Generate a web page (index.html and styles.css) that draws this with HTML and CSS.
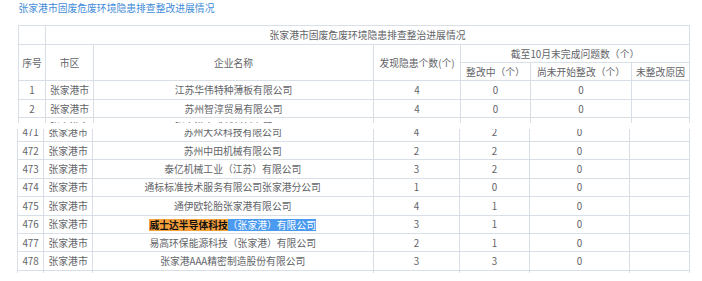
FILE: index.html
```html
<!DOCTYPE html>
<html lang="zh">
<head>
<meta charset="utf-8">
<link rel="stylesheet" href="styles.css">
</head>
<body>
<div class="title">张家港市固废危废环境隐患排查整改进展情况</div>
<div class="piece top">
  <table class="grid">
    <colgroup>
      <col class="c1"><col class="c2"><col class="c3"><col class="c4"><col class="c5"><col class="c6"><col class="c7">
    </colgroup>
    <tr class="h1"><td></td><td colspan="6">张家港市固废危废环境隐患排查整治进展情况</td></tr>
    <tr class="h2"><td rowspan="2">序号</td><td rowspan="2">市区</td><td rowspan="2">企业名称</td><td rowspan="2">发现隐患个数(个)</td><td colspan="3">截至10月末完成问题数（个）</td></tr>
    <tr class="h3"><td>整改中（个）</td><td>尚未开始整改（个）</td><td>未整改原因</td></tr>
    <tr class="d1"><td>1</td><td>张家港市</td><td>江苏华伟特种薄板有限公司</td><td>4</td><td>0</td><td>0</td><td></td></tr>
    <tr class="d2"><td>2</td><td>张家港市</td><td>苏州智淳贸易有限公司</td><td>4</td><td>0</td><td>0</td><td></td></tr>
    <tr class="d2"><td>3</td><td>张家港市</td><td>张家港大成新材料有限公司</td><td>4</td><td>0</td><td>0</td><td></td></tr>
  </table>
</div>
<div class="piece bottom">
  <table class="grid">
    <colgroup>
      <col class="b1"><col class="b2"><col class="b3"><col class="b4"><col class="b5"><col class="b6"><col class="b7">
    </colgroup>
    <tr><td>471</td><td>张家港市</td><td>苏州大众科技有限公司</td><td>4</td><td>2</td><td>0</td><td></td></tr>
    <tr><td>472</td><td>张家港市</td><td>苏州中田机械有限公司</td><td>2</td><td>2</td><td>0</td><td></td></tr>
    <tr><td>473</td><td>张家港市</td><td>泰亿机械工业（江苏）有限公司</td><td>3</td><td>2</td><td>0</td><td></td></tr>
    <tr><td>474</td><td>张家港市</td><td>通标标准技术服务有限公司张家港分公司</td><td>1</td><td>0</td><td>0</td><td></td></tr>
    <tr><td>475</td><td>张家港市</td><td>通伊欧轮胎张家港有限公司</td><td>4</td><td>1</td><td>0</td><td></td></tr>
    <tr><td>476</td><td>张家港市</td><td><span class="hl hl-match">威士达半导体科技</span><span class="hl hl-sel">（张家港）有限公司</span></td><td>3</td><td>1</td><td>0</td><td></td></tr>
    <tr><td>477</td><td>张家港市</td><td>易高环保能源科技（张家港）有限公司</td><td>2</td><td>1</td><td>0</td><td></td></tr>
    <tr><td>478</td><td>张家港市</td><td>张家港AAA精密制造股份有限公司</td><td>3</td><td>3</td><td>0</td><td></td></tr>
    <tr><td></td><td></td><td></td><td></td><td></td><td></td><td></td></tr>
  </table>
</div>
</body>
</html>
```
FILE: styles.css
```css
html, body {
  margin: 0;
  padding: 0;
  background: #ffffff;
}
body {
  font-family: "Noto Sans CJK SC", "Noto Sans", sans-serif;
  font-size: 9.8px;
  color: #626468;
}
.title {
  box-sizing: border-box;
  height: 25px;
  padding: 1px 0 0 18.5px;
  line-height: 14px;
  color: #3f8cd9;
}
.piece {
  overflow: hidden;
}
.top {
  height: 98.3px;
  padding-left: 18px;
}
.bottom {
  height: 144px;
  margin-top: 5.7px;
  padding-left: 16.7px;
}
.grid {
  border-collapse: collapse;
  table-layout: fixed;
  background: #ffffff;
}
.top .grid {
  width: 672px;
}
.bottom .grid {
  width: 673px;
  margin-top: -6.4px;
}
.grid td {
  border: 1px solid #d8dfe7;
  padding: 0;
  text-align: center;
  vertical-align: middle;
  white-space: nowrap;
  line-height: 12px;
}
.c1 { width: 27px; }
.c2 { width: 48px; }
.c3 { width: 280px; }
.c4 { width: 87px; }
.c5 { width: 70px; }
.c6 { width: 101px; }
.c7 { width: 58px; }
.b1 { width: 26.8px; }
.b2 { width: 48.3px; }
.b3 { width: 280.9px; }
.b4 { width: 86.6px; }
.b5 { width: 69.4px; }
.b6 { width: 100.6px; }
.b7 { width: 59.4px; }
.h1 { height: 19px; }
.h2 { height: 18px; }
.h3 { height: 18px; }
.d1 { height: 19px; }
.d2 { height: 18.3px; }
.bottom .grid tr { height: 18.4px; }
.hl {
  display: inline-block;
  height: 12.3px;
  line-height: 12.3px;
  vertical-align: middle;
}
.hl-match {
  background: #f6a03c;
  color: #111111;
  font-weight: bold;
}
.hl-sel {
  background: #4a9af0;
  color: #ffffff;
}
```
